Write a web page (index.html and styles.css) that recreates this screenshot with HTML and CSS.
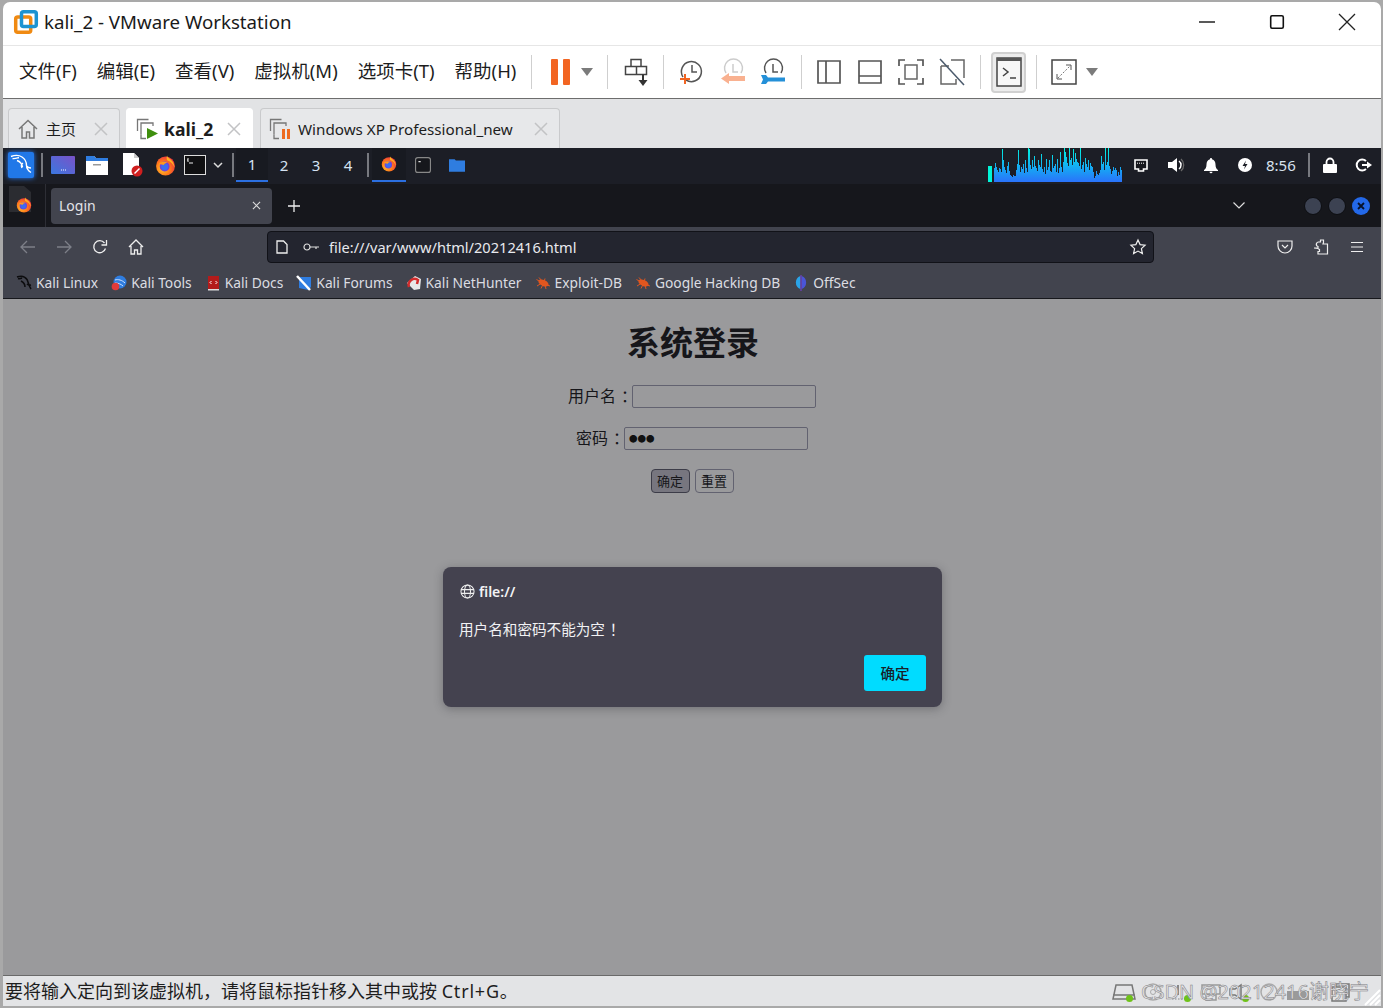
FILE: index.html
```html
<!DOCTYPE html>
<html lang="zh">
<head>
<meta charset="utf-8">
<title>kali_2 - VMware Workstation</title>
<link rel="stylesheet" href="styles.css">
</head>
<body>
<svg class="defs" width="0" height="0" aria-hidden="true">
  <defs>
    <radialGradient id="fxg" cx="35%" cy="65%" r="75%"><stop offset="0" stop-color="#ffc62e"/><stop offset=".5" stop-color="#ff7a1a"/><stop offset="1" stop-color="#ea2a45"/></radialGradient>
    <linearGradient id="wave" x1="0" y1="0" x2="0" y2="1"><stop offset="0" stop-color="#00f5e0"/><stop offset=".5" stop-color="#12b4f2"/><stop offset="1" stop-color="#2a72fa"/></linearGradient>
    <linearGradient id="scr" x1="0" y1="1" x2="1" y2="0"><stop offset="0" stop-color="#3a78e0"/><stop offset="1" stop-color="#7a52c8"/></linearGradient>
    <symbol id="firefox" viewBox="0 0 20 20">
      <circle cx="10" cy="10.500" r="9" fill="url(#fxg)"/>
      <path d="M11.500 .5c.5 2.500 3.500 3 5 5.500 1.500 2.400 2 4.500 2 6-1-3-3.500-5.500-7-7-.6-1.500-.6-3.500 0-4.500z" fill="#ffb01f"/>
      <circle cx="9.200" cy="11" r="4.700" fill="#7440d8"/>
      <circle cx="9.200" cy="11.300" r="3.300" fill="#3b6df0"/>
      <path d="M3.200 9c1.800-2.500 6-3.300 8.800-1.600-2 .2-3.200 1.100-3.700 2.200-1.500-.7-3.300-.8-5.100-.6z" fill="#ff9a1f"/>
    </symbol>
    <symbol id="bug" viewBox="0 0 16 16">
      <ellipse cx="8.500" cy="8" rx="5.500" ry="3" transform="rotate(25 8.500 8)" fill="#e0561f"/>
      <path d="M1.500 4.500L6 7M4 2.500l3.500 4M10 3.500L9 7M2 11l4-2.500M6 13.500l2-4M11 14l-1-4M15 11l-3-1" stroke="#e0561f" fill="none"/>
    </symbol>
    <symbol id="xmark" viewBox="0 0 14 14"><path d="M1 1l12 12M13 1L1 13" fill="none" stroke="currentColor" stroke-width="1.500"/></symbol>
    <symbol id="stack" viewBox="0 0 22 22"><path d="M1.500 13V1.500h11M5 16.500V5h12v3" fill="none" stroke="#777" stroke-width="1.300"/><path d="M5 16.500v4h5" fill="none" stroke="#777" stroke-width="1.300"/></symbol>
    <symbol id="caret" viewBox="0 0 12 8"><path d="M0 0h12L6 8z" fill="#7b7b7b"/></symbol>
  </defs>
</svg>

<div class="window">
  <header class="titlebar">
    <svg class="app-logo" viewBox="0 0 24 24">
      <rect x="1.700" y="7" width="15" height="15.300" rx="2" fill="none" stroke="#f08a12" stroke-width="3.500"/>
      <rect x="7.500" y="1.700" width="14.800" height="14.800" rx="2" fill="none" stroke="#1c93d1" stroke-width="3.500"/>
    </svg>
    <span class="app-title">kali_2 - VMware Workstation</span>
    <div class="win-controls">
      <svg class="win-btn" viewBox="0 0 16 16"><path d="M0 8h16" stroke="#222" stroke-width="1.300"/></svg>
      <svg class="win-btn" viewBox="0 0 16 16"><rect x="1.700" y="1.700" width="12.600" height="12.600" rx="1.500" fill="none" stroke="#111" stroke-width="1.600"/></svg>
      <svg class="win-btn" viewBox="0 0 16 16"><path d="M0 0l16 16M16 0L0 16" stroke="#222" stroke-width="1.300"/></svg>
    </div>
  </header>

  <nav class="toolbar">
    <span class="menu">文件(F)</span><span class="menu">编辑(E)</span><span class="menu">查看(V)</span><span class="menu">虚拟机(M)</span><span class="menu">选项卡(T)</span><span class="menu">帮助(H)</span>
    <i class="tsep tsep-a"></i>
    <svg class="ti ti-pause" viewBox="0 0 20 26"><rect x="0" y="0" width="7" height="26" rx="1" fill="#f26522"/><rect x="12" y="0" width="7" height="26" rx="1" fill="#f26522"/></svg>
    <svg class="caret caret-a"><use href="#caret"/></svg>
    <i class="tsep tsep-b"></i>
    <svg class="ti ti-send" viewBox="0 0 26 28"><path d="M7 1.500h10v7H7zM1.500 8.500h21v8h-21zM12.500 8.500v8" fill="none" stroke="#444" stroke-width="1.500"/><path d="M19 16.500v8" stroke="#333" stroke-width="2"/><path d="M14.500 22h9L19 28z" fill="#333"/></svg>
    <i class="tsep tsep-c"></i>
    <svg class="ti ti-clock" viewBox="0 0 24 26"><path d="M7 21a10 10 0 1 0-3-3" fill="none" stroke="#555" stroke-width="1.500"/><path d="M13 6v7h5" fill="none" stroke="#555" stroke-width="1.500"/><path d="M6 15v10M1 20h10" stroke="#f26522" stroke-width="2"/></svg>
    <svg class="ti ti-clock2" viewBox="0 0 26 26"><path d="M6 14a9 9 0 1 1 15 0" fill="none" stroke="#ccc" stroke-width="1.500"/><path d="M13 5v8h5" fill="none" stroke="#ccc" stroke-width="1.500"/><path d="M9 14v3h16v5H9v3l-8-5.500z" fill="#f9b190"/></svg>
    <svg class="ti ti-clock3" viewBox="0 0 26 26"><path d="M6 14a9 9 0 1 1 15 0" fill="none" stroke="#555" stroke-width="1.500"/><path d="M13 5v8h5" fill="none" stroke="#555" stroke-width="1.500"/><path d="M1 16h5l2 2.500h17v4H8L6 25H1l2-4.500z" fill="#2490d8"/></svg>
    <i class="tsep tsep-d"></i>
    <svg class="ti ti-view" viewBox="0 0 24 24"><path d="M1 1h22v22H1zM9 1v22" fill="none" stroke="#555" stroke-width="1.700"/></svg>
    <svg class="ti ti-view2" viewBox="0 0 24 24"><path d="M1 1h22v22H1zM1 16h22" fill="none" stroke="#555" stroke-width="1.700"/></svg>
    <svg class="ti ti-view3" viewBox="0 0 26 26"><path d="M1 7V1h6M19 1h6v6M25 19v6h-6M7 25H1v-6" fill="none" stroke="#555" stroke-width="1.700"/><rect x="7" y="6" width="12" height="14" fill="none" stroke="#666" stroke-width="1.500"/></svg>
    <svg class="ti ti-view4" viewBox="0 0 26 26"><path d="M2 7h8M2 7v18h15v-5M12 1h13v18" fill="none" stroke="#666" stroke-width="1.500"/><path d="M1 0l24 26" stroke="#4b5a6c" stroke-width="1.500"/></svg>
    <i class="tsep tsep-e"></i>
    <div class="console-btn">
      <svg class="console-ico" viewBox="0 0 26 30"><rect x="1" y="1" width="24" height="28" fill="#f7f7f7" stroke="#444" stroke-width="1.500"/><path d="M1 1h24v3H1z" fill="#555"/><path d="M7 11l5 4-5 4M14 21h6" fill="none" stroke="#444" stroke-width="1.500"/></svg>
    </div>
    <i class="tsep tsep-f"></i>
    <svg class="ti ti-full" viewBox="0 0 26 26"><rect x="1" y="1" width="24" height="24" fill="none" stroke="#444" stroke-width="1.500"/><path d="M6 15v5h5M20 11V6h-5" fill="none" stroke="#555"/><path d="M7 19L19 7" stroke="#777" stroke-dasharray="2 1.500"/></svg>
    <svg class="caret caret-b"><use href="#caret"/></svg>
  </nav>

  <div class="vm-tabs">
    <div class="vm-tab tab-home">
      <svg class="home-ico" viewBox="0 0 20 20"><path d="M1 10l9-8.500L19 10M4 8v11h4.500v-6h3v6H16V8" fill="none" stroke="#777" stroke-width="1.500"/></svg>
      <span class="tab-label">主页</span>
      <svg class="tab-x"><use href="#xmark"/></svg>
    </div>
    <div class="vm-tab tab-active">
      <svg class="stack-ico"><use href="#stack"/><path d="M11 10v11l11-5.500z" fill="#3f8f0e"/></svg>
      <span class="tab-label tab-bold">kali_2</span>
      <svg class="tab-x"><use href="#xmark"/></svg>
    </div>
    <div class="vm-tab tab-xp">
      <svg class="stack-ico"><use href="#stack"/><rect x="13" y="11" width="3" height="10" fill="#ee6a1f"/><rect x="18" y="11" width="3" height="10" fill="#ee6a1f"/></svg>
      <span class="tab-label">Windows XP Professional_new</span>
      <svg class="tab-x"><use href="#xmark"/></svg>
    </div>
  </div>

  <div class="guest">
    <div class="panel">
      <div class="kali-btn">
        <svg viewBox="0 0 24 24" class="kali-logo"><path d="M2 3.500c4-1.500 8-1.500 11 .5 3 2 4.500 5 4.500 8.500 0 2.500 1.500 5 4.500 7M10 4.500C8 5 6 6 3.500 5.500M8 7.500c3 1 5 3 5.500 6.500M17.500 13c1 1.500 3 2 4.500 2M14 10c-1.500 1-2 3-1 5" fill="none" stroke="#fff" stroke-width="1.400"/></svg>
      </div>
      <i class="psep psep-a"></i>
      <svg class="pi pi-screen" viewBox="0 0 24 18"><rect width="24" height="18" rx="1" fill="url(#scr)"/><path d="M10 14h1M12 14h1M14 14h1" stroke="#fff"/></svg>
      <svg class="pi pi-files" viewBox="0 0 22 20"><path d="M0 1h8l2 2h12v17H0z" fill="#fff"/><path d="M0 3h22v3H0z" fill="#2f7de0"/><path d="M0 1h8l2 2H0z" fill="#2f7de0"/><rect x="7" y="9" width="8" height="1.500" fill="#999"/></svg>
      <svg class="pi pi-doc" viewBox="0 0 20 24"><path d="M1 0h11l5 5v17H1z" fill="#fff"/><path d="M12 0l5 5h-5z" fill="#ccc"/><circle cx="15" cy="18" r="5.500" fill="#d01f1f"/><path d="M12.500 20.500l5-5" stroke="#fff" stroke-width="1.500"/></svg>
      <svg class="pi pi-fox"><use href="#firefox"/></svg>
      <svg class="pi pi-term" viewBox="0 0 22 20"><rect x=".5" y=".5" width="21" height="19" fill="#101012" stroke="#ddd"/><path d="M3 5h1M4 3v4M5 8h4" stroke="#eee"/></svg>
      <svg class="pi pi-chev" viewBox="0 0 10 6"><path d="M1 1l4 4 4-4" fill="none" stroke="#ddd" stroke-width="1.500"/></svg>
      <i class="psep psep-b"></i>
      <span class="ws ws-on">1</span><span class="ws">2</span><span class="ws">3</span><span class="ws">4</span>
      <i class="psep psep-c"></i>
      <span class="task task-on"><svg class="task-ico"><use href="#firefox"/></svg></span>
      <span class="task"><svg class="task-ico" viewBox="0 0 14 14"><rect x=".5" y=".5" width="13" height="13" rx="2" fill="#16171c" stroke="#888"/><path d="M3 4h2" stroke="#ddd"/></svg></span>
      <span class="task"><svg class="task-ico" viewBox="0 0 14 12"><path d="M0 1h5l1 1h8v10H0z" fill="#2f7de0"/></svg></span>

      <svg class="wave" viewBox="0 0 134 34" preserveAspectRatio="none">
        <rect x="0" y="18" width="4" height="16" fill="#00f5d8"/>
        <path fill="none" stroke="url(#wave)" stroke-width="1" d="M6.500 34V20M7.500 34V15M8.500 34V19M9.500 34V22M10.500 34V24M11.500 34V20M12.500 34V21M13.500 34V24M14.500 34V1M15.500 34V12M16.500 34V19M17.500 34V22M18.500 34V25M19.500 34V18M20.500 34V14M21.500 34V23M22.500 34V27M23.500 34V28M24.500 34V29M25.500 34V27M26.500 34V28M27.500 34V28M28.500 34V22M29.500 34V16M30.500 34V2M31.500 34V17M32.500 34V24M33.500 34V19M34.500 34V21M35.500 34V16M36.500 34V25M37.500 34V12M38.500 34V20M39.500 34V24M40.500 34V0M41.500 34V1M42.500 34V17M43.500 34V21M44.500 34V12M45.500 34V19M46.500 34V8M47.500 34V18M48.500 34V20M49.500 34V23M50.500 34V12M51.500 34V17M52.500 34V19M53.500 34V6M54.500 34V21M55.500 34V24M56.500 34V19M57.500 34V26M58.500 34V11M59.500 34V22M60.500 34V19M61.500 34V12M62.500 34V23M63.500 34V24M64.500 34V7M65.500 34V20M66.500 34V18M67.500 34V16M68.500 34V24M69.500 34V11M70.500 34V25M71.500 34V20M72.500 34V4M73.500 34V19M74.500 34V24M75.500 34V14M76.500 34V0M77.500 34V4M78.500 34V9M79.500 34V15M80.500 34V18M81.500 34V0M82.500 34V12M83.500 34V10M84.500 34V17M85.500 34V1M86.500 34V14M87.500 34V5M88.500 34V11M89.500 34V14M90.500 34V15M91.500 34V18M92.500 34V0M93.500 34V21M94.500 34V17M95.500 34V14M96.500 34V24M97.500 34V10M98.500 34V16M99.500 34V19M100.500 34V12M101.500 34V22M102.500 34V15M103.500 34V18M104.500 34V19M105.500 34V24M106.500 34V30M107.500 34V28M108.500 34V23M109.500 34V26M110.500 34V27M111.500 34V25M112.500 34V22M113.500 34V8M114.500 34V16M115.500 34V14M116.500 34V22M117.500 34V0M118.500 34V17M119.500 34V14M120.500 34V0M121.500 34V18M122.500 34V21M123.500 34V26M124.500 34V23M125.500 34V19M126.500 34V22M127.500 34V20M128.500 34V22M129.500 34V28M130.500 34V24M131.500 34V27M132.500 34V19M133.500 34V22"/>
      </svg>
      <svg class="pi pi-net" viewBox="0 0 14 13"><path d="M1 1h12v9H9.500v2h-5v-2H1z" fill="#16171c" stroke="#fff" stroke-width="1.600"/><path d="M3 4.200h8" stroke="#fff" stroke-dasharray="1 1"/></svg>
      <svg class="pi pi-vol" viewBox="0 0 18 16"><path d="M0 5h4l5-4v14l-5-4H0z" fill="#fff"/><path d="M11 4a5 5 0 0 1 0 8" fill="none" stroke="#fff" stroke-width="1.500"/><path d="M13 2a8 8 0 0 1 0 12" fill="none" stroke="#666" stroke-width="1.300"/></svg>
      <svg class="pi pi-bell" viewBox="0 0 14 15"><path d="M7 0a1 1 0 0 1 1 1.200C10.500 2 11.500 4 11.500 6.500c0 3 1 4.500 2.500 5.500v1H0v-1c1.500-1 2.500-2.500 2.500-5.500C2.500 4 3.500 2 6 1.200A1 1 0 0 1 7 0zM5.500 13.700h3a1.500 1.500 0 0 1-3 0z" fill="#fff"/></svg>
      <svg class="pi pi-bolt" viewBox="0 0 14 14"><circle cx="7" cy="7" r="7" fill="#fff"/><path d="M8 2.500L4.500 8H7l-1 3.500L9.500 6H7z" fill="#1c1e26"/></svg>
      <span class="clock">8:56</span>
      <i class="psep psep-d"></i>
      <svg class="pi pi-lock" viewBox="0 0 14 15"><path d="M3.500 6.500V4a3.500 3.500 0 0 1 7 0v2.500" fill="none" stroke="#fff" stroke-width="1.800"/><rect y="6" width="14" height="9" rx="1" fill="#fff"/></svg>
      <svg class="pi pi-out" viewBox="0 0 16 14"><path d="M10 3a5.500 5.500 0 1 0 0 8" fill="none" stroke="#fff" stroke-width="2"/><path d="M6 7h6" stroke="#fff" stroke-width="2"/><path d="M11 3.500L16 7l-5 3.500z" fill="#fff"/></svg>
    </div>

    <div class="ff-strip">
      <div class="ff-app">
        <svg class="ff-app-doc" viewBox="0 0 24 27"><path d="M1 0h15l7 6v20H1z" fill="#2b2c31"/></svg>
        <svg class="ff-app-ico"><use href="#firefox"/></svg>
      </div>
      <div class="ff-tab">
        <span>Login</span>
        <svg class="ff-tab-x" viewBox="0 0 10 10"><path d="M1 1l8 8M9 1L1 9" stroke="#ddd" stroke-width="1.200"/></svg>
      </div>
      <svg class="ff-plus" viewBox="0 0 12 12"><path d="M6 0v12M0 6h12" stroke="#eee" stroke-width="1.300"/></svg>
      <svg class="ff-down" viewBox="0 0 12 7"><path d="M.5.500L6 6 11.500.500" fill="none" stroke="#ddd" stroke-width="1.200"/></svg>
      <i class="ff-dot"></i><i class="ff-dot"></i>
      <span class="ff-close"><svg viewBox="0 0 8 8" class="ff-close-x"><path d="M1 1l6 6M7 1L1 7" stroke="#08122a" stroke-width="1.800"/></svg></span>
    </div>

    <div class="ff-nav">
      <svg class="nav-ico nav-back" viewBox="0 0 16 14"><path d="M1 7h14M7 1L1 7l6 6" fill="none" stroke="#7d7f88" stroke-width="1.300"/></svg>
      <svg class="nav-ico nav-fwd" viewBox="0 0 16 14"><path d="M15 7H1M9 1l6 6-6 6" fill="none" stroke="#7d7f88" stroke-width="1.300"/></svg>
      <svg class="nav-ico nav-reload" viewBox="0 0 16 16"><path d="M13.500 9.500A6 6 0 1 1 12.500 4" fill="none" stroke="#eee" stroke-width="1.300"/><path d="M14.500 1v5h-5" fill="none" stroke="#eee" stroke-width="1.300"/></svg>
      <svg class="nav-ico nav-home" viewBox="0 0 16 16"><path d="M1 8l7-7 7 7M3 7v8h3.500v-4h3v4H13V7" fill="none" stroke="#eee" stroke-width="1.300"/></svg>
      <div class="urlbar">
        <svg class="url-doc" viewBox="0 0 12 14"><path d="M1 1h6.500L11 4.500V13H1z" fill="none" stroke="#eee" stroke-width="1.300"/></svg>
        <svg class="url-key" viewBox="0 0 16 8"><circle cx="4" cy="4" r="3" fill="none" stroke="#ddd" stroke-width="1.200"/><path d="M7 4h9M13 4v2" stroke="#ddd" stroke-width="1.200"/></svg>
        <span class="url-text">file:///var/www/html/20212416.html</span>
        <svg class="url-star" viewBox="0 0 16 16"><path d="M8 1l2.100 4.600 5 .6-3.700 3.400 1 5L8 12.100 3.600 14.600l1-5L.9 6.200l5-.6z" fill="none" stroke="#eee" stroke-width="1.200"/></svg>
      </div>
      <svg class="nav-ico nav-pocket" viewBox="0 0 16 14"><path d="M1 1h14v5a7 7 0 0 1-14 0z" fill="none" stroke="#eee" stroke-width="1.200"/><path d="M5 5l3 3 3-3" fill="none" stroke="#eee" stroke-width="1.200"/></svg>
      <svg class="nav-ico nav-ext" viewBox="0 0 16 16"><path d="M1 9h4V7.500C3.500 7 3 6 3.500 4.500 4 3.200 5 3 5.500 3h2V1h3v2.500L10 5h4.500v10H5v-2.500h1.500V10.500L5 9.500z" fill="none" stroke="#eee" stroke-width="1.200"/></svg>
      <svg class="nav-ico nav-menu" viewBox="0 0 14 12"><path d="M1 1.500h12M1 6h12M1 10.500h12" stroke="#eee" stroke-width="1.200"/></svg>
    </div>

    <div class="ff-marks">
      <span class="mark"><svg class="mark-ico" viewBox="0 0 16 16"><path d="M1 2c4-1.500 8-.5 10 2.500 1.200 2 1 4.500 4 9.500M6 3C5 3.500 3.500 4 2 3.500M5 6c2 1 4 3 4 6M11 9c1 1 2.500 1.300 4 1" fill="none" stroke="#0c0c0e" stroke-width="1.500"/></svg>Kali Linux</span>
      <span class="mark"><svg class="mark-ico" viewBox="0 0 16 16"><circle cx="9" cy="7" r="6.500" fill="#2f7de0"/><path d="M4 5c3-1 7 0 10 3M4 8c3 0 6 1 8 3" stroke="#cfe3ff" fill="none"/><circle cx="4.500" cy="11.500" r="3.800" fill="#e23b3b"/></svg>Kali Tools</span>
      <span class="mark"><svg class="mark-ico" viewBox="0 0 16 16"><rect x="3" y="1" width="11" height="13" fill="#b31b1b"/><path d="M3 14h11v1.500H3z" fill="#ddd"/><path d="M6.500 6L5 7.500 6.500 9M10.500 6L12 7.500 10.500 9" stroke="#fff" fill="none"/></svg>Kali Docs</span>
      <span class="mark"><svg class="mark-ico" viewBox="0 0 16 16"><path d="M3 2h12v10l-3 3-9-2z" fill="#2f7de0"/><path d="M1 1l13 14" stroke="#fff" stroke-width="2.500"/></svg>Kali Forums</span>
      <span class="mark"><svg class="mark-ico" viewBox="0 0 16 16"><path d="M1 8l8-7 6 3-1 10-6 1z" fill="#e8e8e8"/><path d="M3 12a6 6 0 0 1 9-7l-1 4" fill="none" stroke="#d32c2c" stroke-width="2.500"/></svg>Kali NetHunter</span>
      <span class="mark"><svg class="mark-ico"><use href="#bug"/></svg>Exploit-DB</span>
      <span class="mark"><svg class="mark-ico"><use href="#bug"/></svg>Google Hacking DB</span>
      <span class="mark"><svg class="mark-ico" viewBox="0 0 16 16"><path d="M7.300 1a7 7 0 0 0 0 13z" fill="#2aa4e8"/><path d="M8.700 1a7 7 0 0 1 0 13z" fill="#4a55d8"/><path d="M8 0v16" stroke="#7a3fd8"/></svg>OffSec</span>
    </div>

    <main class="page">
      <h1 class="page-title">系统登录</h1>
      <div class="field"><label class="field-label">用户名<span class="punct">：</span></label><span class="input"></span></div>
      <div class="field"><label class="field-label">密码<span class="punct">：</span></label><span class="input input-dots">●●●</span></div>
      <div class="actions"><button class="btn btn-focus">确定</button><button class="btn">重置</button></div>

      <div class="dialog">
        <div class="dialog-head">
          <svg class="globe" viewBox="0 0 16 16"><g fill="none" stroke="#eee" stroke-width="1.100"><circle cx="8" cy="8" r="7"/><ellipse cx="8" cy="8" rx="3.200" ry="7"/><path d="M1 6h14M1 10h14"/></g></svg>
          <span>file://</span>
        </div>
        <p class="dialog-msg">用户名和密码不能为空<span class="punct">！</span></p>
        <div class="dialog-foot"><button class="dialog-ok">确定</button></div>
      </div>
    </main>
  </div>

  <footer class="status">
    <span class="status-text">要将输入定向到该虚拟机，请将鼠标指针移入其中或按 <span class="status-key">Ctrl+G</span>。</span>
    <div class="status-icons">
      <span class="si"><svg viewBox="0 0 24 18" class="si-svg"><path d="M1 16l3-14h16l3 14zM1 12h22" fill="none" stroke="#777" stroke-width="1.500"/></svg><i class="led"></i></span>
      <span class="si"><svg viewBox="0 0 24 18" class="si-svg"><circle cx="12" cy="9" r="8" fill="none" stroke="#aaa" stroke-width="1.500"/><circle cx="12" cy="9" r="2.500" fill="none" stroke="#aaa"/></svg></span>
      <span class="si"><svg viewBox="0 0 24 18" class="si-svg"><path d="M2 16h18" stroke="#888" stroke-dasharray="1.500 1.500"/><path d="M8 2v10" stroke="#888" stroke-width="2"/></svg><i class="led"></i></span>
      <span class="si"><svg viewBox="0 0 24 18" class="si-svg"><path d="M3 2h18v9H3zM7 11v6h10v-6" fill="none" stroke="#999" stroke-width="1.500"/></svg></span>
      <span class="si"><svg viewBox="0 0 24 18" class="si-svg"><path d="M2 6h5l6-4v14l-6-4H2z" fill="none" stroke="#777" stroke-width="1.500"/></svg><i class="led"></i></span>
      <span class="si"><svg viewBox="0 0 24 18" class="si-svg"><circle cx="12" cy="9" r="8" fill="none" stroke="#aaa" stroke-width="1.500"/></svg></span>
      <span class="si"><svg viewBox="0 0 24 18" class="si-svg"><rect x="1" y="8" width="22" height="9" fill="#9a9a9a"/></svg></span>
      <span class="si si-last"><svg viewBox="0 0 24 18" class="si-svg"><path d="M4 4h14v14H4zM8 4V1h13v13h-3" fill="none" stroke="#777" stroke-width="1.500"/></svg></span>
    </div>
    <svg class="grip" viewBox="0 0 20 20"><path d="M19 4L4 19M19 9L9 19M19 14l-5 5" stroke="#fff" stroke-width="2"/></svg>
    <span class="watermark">CSDN @20212416谢晓宁</span>
  </footer>
</div>
</body>
</html>
```
FILE: styles.css
```css
* { box-sizing: border-box; }
html, body { margin: 0; height: 100%; }
body {
  background: #a9a9a9;
  padding: 2px 2px 2px 3px;
  font-family: "Noto Sans", "Noto Sans CJK SC", sans-serif;
  overflow: hidden;
}
.defs { position: absolute; }
svg { display: block; flex: none; overflow: visible; }
i { display: block; flex: none; }
.window {
  height: 1004px;
  display: flex;
  flex-direction: column;
  background: #fff;
  border-radius: 7px 7px 0 0;
  overflow: hidden;
}

/* title bar */
.titlebar {
  height: 44px;
  flex: none;
  display: flex;
  align-items: center;
  padding-left: 11px;
  padding-bottom: 4px;
  border-bottom: 1px solid #e6e6e6;
}
.app-logo { width: 24px; height: 24px; }
.app-title { margin-left: 6px; font-size: 18.7px; color: #1a1a1a; }
.win-controls { margin-left: auto; display: flex; align-items: center; gap: 54px; padding-right: 26px; }
.win-btn { width: 16px; height: 16px; }

/* toolbar */
.toolbar {
  height: 53px;
  flex: none;
  display: flex;
  align-items: center;
  padding-left: 16px;
  border-bottom: 1px solid #6d6d6d;
}
.menu { font-size: 18.5px; color: #1d1d1d; margin: 0 20px 3px 0; white-space: nowrap; line-height: 24px; }
.tsep { width: 1px; height: 34px; background: #cfcfcf; }
.tsep-a { margin-left: -5px; }
.ti-pause { width: 20px; height: 26px; margin-left: 19px; }
.caret { width: 12px; height: 8px; }
.caret-a { margin-left: 10px; }
.tsep-b { margin-left: 14px; }
.ti-send { width: 26px; height: 28px; margin-left: 16px; }
.tsep-c { margin-left: 13px; }
.ti-clock { width: 24px; height: 26px; margin-left: 15px; }
.ti-clock2 { width: 26px; height: 26px; margin-left: 17px; }
.ti-clock3 { width: 26px; height: 26px; margin-left: 14px; }
.tsep-d { margin-left: 15px; }
.ti-view { width: 24px; height: 24px; margin-left: 15px; }
.ti-view2 { width: 24px; height: 24px; margin-left: 17px; }
.ti-view3 { width: 26px; height: 26px; margin-left: 16px; }
.ti-view4 { width: 26px; height: 26px; margin-left: 15px; }
.tsep-e { margin-left: 15px; }
.console-btn {
  width: 35px; height: 41px; margin-left: 10px;
  display: flex; align-items: center; justify-content: center;
  background: #ececec; border: 2px solid #d0d0d0; border-radius: 4px;
}
.console-ico { width: 26px; height: 30px; }
.tsep-f { margin-left: 10px; }
.ti-full { width: 26px; height: 26px; margin-left: 14px; }
.caret-b { margin-left: 9px; }

/* VM tabs */
.vm-tabs {
  height: 49px;
  flex: none;
  display: flex;
  align-items: flex-end;
  gap: 6px;
  padding-left: 5px;
  background: #e2e3e5;
}
.vm-tab {
  height: 40px;
  display: flex;
  align-items: center;
  border: 1px solid #c9cacc;
  border-bottom: 0;
  border-radius: 4px 4px 0 0;
  background: #e7e8ea;
  color: #1d1d1d;
}
.tab-home { width: 112px; padding-left: 9px; }
.tab-active { width: 127px; padding-left: 9px; background: #fff; border-color: #fff; }
.tab-xp { width: 300px; padding-left: 8px; margin-left: 1px; }
.home-ico { width: 20px; height: 20px; }
.stack-ico { width: 22px; height: 22px; }
.tab-label { font-size: 15.2px; margin-left: 7px; white-space: nowrap; }
.tab-home .tab-label { margin-left: 8px; font-size: 15px; }
.tab-active .tab-bold { font-weight: 700; margin-left: 6px; font-size: 17.6px; }
.tab-x { width: 14px; height: 14px; margin-left: auto; margin-right: 11px; color: #c2c3c5; }

/* guest */
.guest { flex: 1; min-height: 0; display: flex; flex-direction: column; background: #9a9a9c; }

.panel {
  height: 36px;
  flex: none;
  display: flex;
  align-items: center;
  background: #1c1e26;
  padding: 0 0 2px 5px;
  color: #e6e6e6;
}
.kali-btn {
  width: 26px; height: 26px;
  background: #2178e8;
  border-radius: 2px;
  box-shadow: 0 0 5px #2a80ff;
  display: flex; align-items: center; justify-content: center;
}
.kali-logo { width: 24px; height: 24px; }
.psep { width: 2px; height: 24px; background: #77797f; }
.psep-a { margin-left: 7px; }
.pi-screen { width: 24px; height: 18px; margin-left: 8px; }
.pi-files { width: 22px; height: 20px; margin-left: 11px; }
.pi-doc { width: 20px; height: 24px; margin-left: 14px; }
.pi-fox { width: 21px; height: 21px; margin-left: 13px; }
.pi-term { width: 22px; height: 20px; margin-left: 8px; }
.pi-chev { width: 10px; height: 6px; margin-left: 7px; }
.psep-b { margin-left: 9px; margin-right: 2px; }
.ws {
  width: 32px; height: 34px;
  display: flex; align-items: center; justify-content: center;
  font-size: 15px; color: #d5e3f2;
}
.ws-on { background: #181a21; border-bottom: 2px solid #2b6fe0; }
.psep-c { margin: 0 3px; }
.task { width: 34px; height: 34px; display: flex; align-items: center; justify-content: center; }
.task-on { background: #181a21; border-bottom: 2px solid #2b6fe0; }
.task-ico { width: 16px; height: 16px; }
.wave { width: 134px; height: 34px; margin-left: 514px; }
.pi-net { width: 14px; height: 13px; margin-left: 12px; }
.pi-vol { width: 18px; height: 16px; margin-left: 20px; }
.pi-bell { width: 14px; height: 15px; margin-left: 18px; }
.pi-bolt { width: 14px; height: 14px; margin-left: 20px; }
.clock { font-size: 15px; margin-left: 14px; color: #d8e2ee; }
.psep-d { margin-left: 12px; }
.pi-lock { width: 14px; height: 15px; margin-left: 13px; }
.pi-out { width: 16px; height: 14px; margin-left: 19px; }

.ff-strip {
  height: 43px;
  flex: none;
  display: flex;
  align-items: center;
  background: #16171c;
}
.ff-app {
  width: 43px; height: 43px;
  position: relative;
  display: flex; align-items: center; justify-content: center;
  border-right: 1px solid #2d2e35;
  margin-right: 5px;
  padding-bottom: 2px;
}
.ff-app-doc { position: absolute; left: 5px; top: 2px; width: 24px; height: 27px; }
.ff-app-ico { width: 16px; height: 16px; position: relative; }
.ff-tab {
  width: 221px; height: 36px;
  display: flex; align-items: center; justify-content: space-between;
  padding: 0 11px 0 8px;
  background: #42444e;
  border-radius: 4px;
  font-size: 14px;
  color: #e2e3e8;
}
.ff-tab-x { width: 9px; height: 9px; }
.ff-plus { width: 12px; height: 12px; margin-left: 16px; }
.ff-down { width: 12px; height: 7px; margin-left: 933px; }
.ff-dot { width: 18px; height: 18px; border-radius: 50%; background: #3c4252; border: 1px solid #0d0e12; margin-left: 6px; }
.ff-dot:first-of-type { margin-left: 59px; }
.ff-close {
  width: 18px; height: 18px; margin-left: 6px;
  background: #2368e8; border-radius: 50%;
  display: flex; align-items: center; justify-content: center;
}
.ff-close-x { width: 8px; height: 8px; }

.ff-nav {
  height: 40px;
  flex: none;
  display: flex;
  align-items: center;
  background: #42444e;
  padding-left: 17px;
}
.nav-ico { width: 16px; height: 16px; }
.nav-fwd { margin-left: 20px; }
.nav-reload { margin-left: 20px; }
.nav-home { margin-left: 20px; }
.urlbar {
  width: 887px; height: 32px;
  margin-left: 123px;
  display: flex; align-items: center;
  background: #23252f;
  border: 1px solid #111218;
  border-radius: 4px;
  padding: 0 7px 0 8px;
  color: #e8e9ee;
  font-size: 14.6px;
}
.url-doc { width: 12px; height: 14px; }
.url-key { width: 16px; height: 8px; margin-left: 15px; }
.url-text { margin-left: 10px; white-space: nowrap; }
.url-star { width: 16px; height: 16px; margin-left: auto; }
.nav-pocket { margin-left: 123px; height: 14px; }
.nav-ext { margin-left: 20px; }
.nav-menu { margin-left: 21px; width: 14px; height: 12px; }

.ff-marks {
  height: 32px;
  flex: none;
  display: flex;
  align-items: center;
  gap: 13px;
  padding-left: 13px;
  background: #42444e;
  border-bottom: 1px solid #17181c;
  font-size: 13.8px;
  color: #dcdde2;
}
.mark { display: flex; align-items: center; gap: 4px; white-space: nowrap; }
.mark-ico { width: 16px; height: 16px; }

/* page */
.page { flex: 1; min-height: 0; position: relative; text-align: center; color: #16161a; background: #9a9a9c; }
.page-title { margin: 22px 0 0; padding-left: 2px; font-size: 33px; line-height: 44px; font-weight: 700; }
.field {
  display: flex; justify-content: center; align-items: center;
  margin-top: 19px;
  height: 24px;
  font-size: 16px;
}
.field + .field { margin-top: 18px; }
.field-label { white-space: nowrap; margin-bottom: 2px; }
.punct { padding-left: .32em; margin-right: -.32em; }
.input {
  width: 184px; height: 23px;
  display: block;
  border: 1px solid #626270;
  border-radius: 2px;
  text-align: left;
  padding-left: 4px;
  font-size: 8.5px;
  line-height: 21px;
  color: #111;
}
.actions { display: flex; justify-content: center; gap: 5px; margin-top: 19px; }
.btn {
  width: 39px; height: 24px; padding: 0 0 2px;
  background: #9a9a9c;
  border: 1px solid #626270;
  border-radius: 4px;
  font: 13px "Noto Sans CJK SC", sans-serif;
  color: #16161a;
}
.btn-focus { background: #77767f; border-color: #3c3c48; }

.dialog {
  position: absolute;
  left: 440px; top: 268px;
  width: 499px; height: 140px;
  display: flex; flex-direction: column;
  background: #44424f;
  border-radius: 8px;
  box-shadow: 0 2px 10px rgba(40,40,45,.35);
  padding: 15px 16px 16px;
  color: #f2f2f4;
  text-align: left;
}
.dialog-head { display: flex; align-items: center; gap: 4px; font-size: 14px; font-weight: 600; height: 18px; }
.globe { width: 15px; height: 15px; margin-left: 1px; }
.dialog-msg { margin: 18px 0 0; font-size: 14.6px; line-height: 22px; }
.dialog-foot { margin-top: auto; display: flex; justify-content: flex-end; }
.dialog-ok {
  width: 62px; height: 36px; padding: 0 0 2px;
  background: #00dcff; border: 0; border-radius: 3px;
  font: 500 14.6px "Noto Sans CJK SC", sans-serif;
  color: #17202a;
}

/* status */
.status {
  height: 31px;
  flex: none;
  position: relative;
  display: flex;
  align-items: center;
  background: #e3e4e6;
  border-top: 1px solid #6a6a6a;
  padding: 0 0 2px 2px;
}
.status-text { font-size: 18px; color: #1d1d1d; white-space: nowrap; }
.status-key { letter-spacing: .8px; }
.status-icons { margin-left: auto; display: flex; gap: 5px; padding-right: 29px; margin-top: 4px; }
.si { position: relative; display: block; width: 24px; height: 18px; }
.si-last { margin-left: 13px; }
.si-svg { width: 24px; height: 18px; }
.led { position: absolute; right: 3px; bottom: -1px; width: 7px; height: 7px; border-radius: 50%; background: #6fc21a; }
.grip { position: absolute; right: 0; bottom: 0; width: 20px; height: 20px; }
.watermark {
  position: absolute;
  right: 12px; top: 0;
  font-size: 20px;
  color: #e6e6e8;
  -webkit-text-stroke: .5px #7c7c80;
  white-space: nowrap;
}
```
